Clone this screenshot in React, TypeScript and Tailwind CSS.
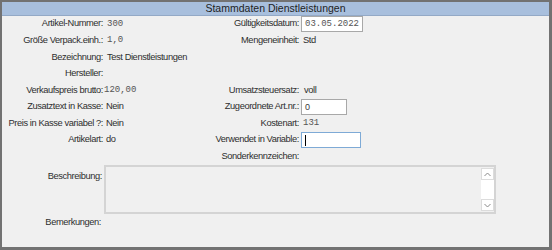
import React from "react";

const font = "font-['Liberation_Sans',Arial,sans-serif]";
const mono = "font-['Liberation_Mono','Courier_New',monospace]";

function Label({ children }: { children: React.ReactNode }) {
  return (
    <div className="flex items-center justify-end whitespace-nowrap text-[9.3px] tracking-[-0.4px] text-[#2e2e2e]">
      {children}
    </div>
  );
}

function Value({ children, isMono, pad = "pl-[4px]" }: { children?: React.ReactNode; isMono?: boolean; pad?: string }) {
  return (
    <div
      className={`flex items-center whitespace-nowrap ${pad} ${
        isMono ? `${mono} text-[9px] text-[#555]` : "text-[9.3px] tracking-[-0.4px] text-[#2e2e2e]"
      }`}
    >
      {children}
    </div>
  );
}

function Box({ w, children, focused }: { w: string; children?: React.ReactNode; focused?: boolean }) {
  return (
    <div className="flex items-center pl-[2px]">
      <div
        className={`${w} h-[16px] bg-white border-[1.5px] flex items-center pl-[3px] ${
          focused ? "border-[#7eaad6]" : "border-[#a8a8a8]"
        }`}
      >
        {children}
      </div>
    </div>
  );
}

function Chevron({ up }: { up?: boolean }) {
  return (
    <svg width="7" height="5" viewBox="0 0 7 5">
      <polyline
        points={up ? "0.5,4 3.5,1 6.5,4" : "0.5,1 3.5,4 6.5,1"}
        fill="none"
        stroke="#8a8a8a"
        strokeWidth="1"
      />
    </svg>
  );
}

export default function App() {
  return (
    <div className={`${font} w-[552px] h-[250px] bg-[#f0f0f0] border-l-2 border-t-2 border-r-[3px] border-b-[3px] border-[#727272] flex flex-col overflow-hidden`}>
      <div className="h-[14px] shrink-0 bg-[#a8bfdd] border-b border-[#93a9c6] flex items-center justify-center text-[10.5px] text-[#1e1e1e]">
        Stammdaten Dienstleistungen
      </div>

      <div className="grid grid-cols-[101px_86px_110px_1fr] auto-rows-[16.6px]">
        <Label>Artikel-Nummer:</Label>
        <Value isMono>300</Value>
        <Label>Gültigkeitsdatum:</Label>
        <Box w="w-[62px]">
          <span className={`${mono} text-[9px] text-[#555]`}>03.05.2022</span>
        </Box>

        <Label>Größe Verpack.einh.:</Label>
        <Value isMono>1,0</Value>
        <Label>Mengeneinheit:</Label>
        <Value>Std</Value>

        <Label>Bezeichnung:</Label>
        <Value>Test Dienstleistungen</Value>
        <div />
        <div />

        <Label>Hersteller:</Label>
        <div />
        <div />
        <div />

        <Label>Verkaufspreis brutto:</Label>
        <Value isMono pad="pl-[1px]">120,00</Value>
        <Label>Umsatzsteuersatz:</Label>
        <Value pad="pl-[5px]">voll</Value>

        <Label>Zusatztext in Kasse:</Label>
        <Value pad="pl-[3px]">Nein</Value>
        <Label>Zugeordnete Art.nr.:</Label>
        <Box w="w-[46px]">
          <span className="text-[9px] text-[#3a3a3a]">0</span>
        </Box>

        <Label>Preis in Kasse variabel ?:</Label>
        <Value pad="pl-[3px]">Nein</Value>
        <Label>Kostenart:</Label>
        <Value isMono>131</Value>

        <Label>Artikelart:</Label>
        <Value pad="pl-[3px]">do</Value>
        <Label>Verwendet in Variable:</Label>
        <Box w="w-[60px]" focused>
          <span className="w-px h-[11px] bg-black" />
        </Box>

        <div />
        <div />
        <Label>Sonderkennzeichen:</Label>
        <div />
      </div>

      <div className="flex h-[49px]">
        <div className="w-[100px] pt-[5px] text-right text-[9.3px] tracking-[-0.4px] text-[#2e2e2e]">Beschreibung:</div>
        <div className="ml-[2px] w-[392px] h-[49px] border-2 border-[#d4d4d4] bg-[#f0f0f0] flex justify-end">
          <div className="w-[13px] mt-[1px] mb-[1px] flex flex-col bg-white">
            <div className="h-[12px] border border-[#dcdcdc] flex items-center justify-center">
              <Chevron up />
            </div>
            <div className="flex-1" />
            <div className="h-[12px] border border-[#dcdcdc] flex items-center justify-center">
              <Chevron />
            </div>
          </div>
        </div>
      </div>

      <div className="flex h-[17px] items-center">
        <div className="w-[99px] text-right text-[9.3px] tracking-[-0.4px] text-[#2e2e2e]">Bemerkungen:</div>
      </div>
    </div>
  );
}
